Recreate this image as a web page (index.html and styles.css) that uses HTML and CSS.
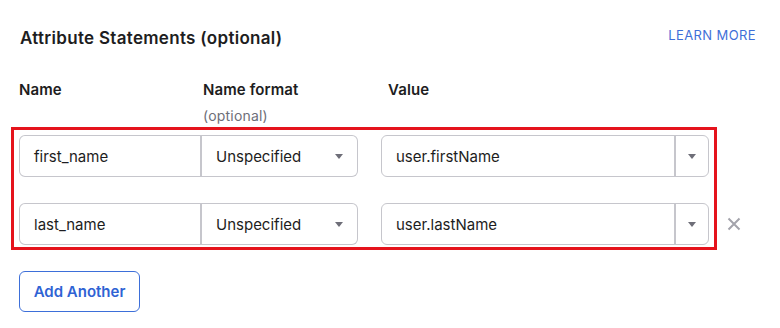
FILE: index.html
```html
<!DOCTYPE html>
<html lang="en">
<head>
    <meta charset="UTF-8">
    <title>Attribute Statements</title>
    <link rel="stylesheet" href="styles.css">
</head>
<body>
    <div class="panel">
        <div class="panel-header">
            <h2 class="title">Attribute Statements (optional)</h2>
            <a class="learn-more" href="#">LEARN MORE</a>
        </div>

        <div class="col-headers">
            <div class="col-label">Name</div>
            <div class="col-label">Name format<span class="optional">(optional)</span></div>
            <div class="col-label">Value</div>
        </div>

        <div class="rows">
            <div class="highlight"></div>
            <div class="row">
                <div class="field name-field">first_name</div>
                <div class="field format-field">Unspecified<span class="caret"></span></div>
                <div class="field value-field">
                    <span class="value-text">user.firstName</span>
                    <span class="value-toggle"><span class="caret"></span></span>
                </div>
            </div>
            <div class="row">
                <div class="field name-field">last_name</div>
                <div class="field format-field">Unspecified<span class="caret"></span></div>
                <div class="field value-field">
                    <span class="value-text">user.lastName</span>
                    <span class="value-toggle"><span class="caret"></span></span>
                </div>
                <button class="remove" aria-label="Remove">
                    <svg width="14" height="14" viewBox="0 0 14 14">
                        <path d="M1.5 1.5 L12.5 12.5 M12.5 1.5 L1.5 12.5" stroke="#a3a3ab" stroke-width="2" fill="none"/>
                    </svg>
                </button>
            </div>
        </div>

        <button class="btn-add">Add Another</button>
    </div>
</body>
</html>
```

FILE: styles.css
```css
* {
    margin: 0;
    padding: 0;
    box-sizing: border-box;
}

body {
    font-family: 'Inter', 'Noto Sans', sans-serif;
    background: #fff;
    color: #1d1d21;
}

.panel {
    padding: 26px 24px 0 19px;
}

.panel-header {
    display: flex;
    justify-content: space-between;
    align-items: flex-start;
}

.title {
    font-size: 17px;
    line-height: 24px;
    font-weight: 600;
    letter-spacing: 0.3px;
    padding-left: 1px;
}

.learn-more {
    font-size: 13px;
    line-height: 18px;
    letter-spacing: 0.4px;
    color: #3f6fd8;
    text-decoration: none;
}

.col-headers {
    display: grid;
    grid-template-columns: 184px 185px auto;
    margin-top: 30px;
}

.col-label {
    font-size: 15px;
    line-height: 20px;
    font-weight: 600;
    letter-spacing: 0.1px;
}

.optional {
    display: block;
    margin-top: 6px;
    font-size: 14px;
    font-weight: 400;
    color: #6e6e78;
    letter-spacing: 0.2px;
}

.rows {
    position: relative;
    margin-top: 1px;
    padding: 8px 0 5px;
    display: flex;
    flex-direction: column;
    gap: 26px;
}

.highlight {
    position: absolute;
    left: -8px;
    top: 0;
    bottom: 0;
    width: 706px;
    border: 3px solid #e5131c;
    pointer-events: none;
}

.row {
    display: flex;
    align-items: center;
}

.field {
    height: 42px;
    border: 1px solid #c6c6cc;
    font-size: 15px;
    display: flex;
    align-items: center;
    padding: 0 14px;
}

.name-field {
    width: 183px;
    border-radius: 6px 0 0 6px;
    border-right: 2px solid #c6c6cc;
}

.format-field {
    width: 156px;
    border-left: none;
    border-radius: 0 6px 6px 0;
    justify-content: space-between;
}

.value-field {
    width: 328px;
    margin-left: 23px;
    border-radius: 6px;
    padding: 0 0 0 14px;
    justify-content: space-between;
}

.value-toggle {
    width: 34px;
    height: 100%;
    border-left: 2px solid #c6c6cc;
    display: flex;
    align-items: center;
    justify-content: center;
}

.caret {
    width: 0;
    height: 0;
    border-left: 4px solid transparent;
    border-right: 4px solid transparent;
    border-top: 5px solid #6e6e78;
}

.remove {
    border: none;
    background: none;
    margin-left: 18px;
    width: 14px;
    height: 14px;
    display: flex;
}

.btn-add {
    margin-top: 21px;
    width: 121px;
    height: 41px;
    border: 1px solid #3d6fd9;
    border-radius: 6px;
    background: #fff;
    color: #2f63d4;
    font-family: inherit;
    font-size: 15px;
    font-weight: 600;
}
```
